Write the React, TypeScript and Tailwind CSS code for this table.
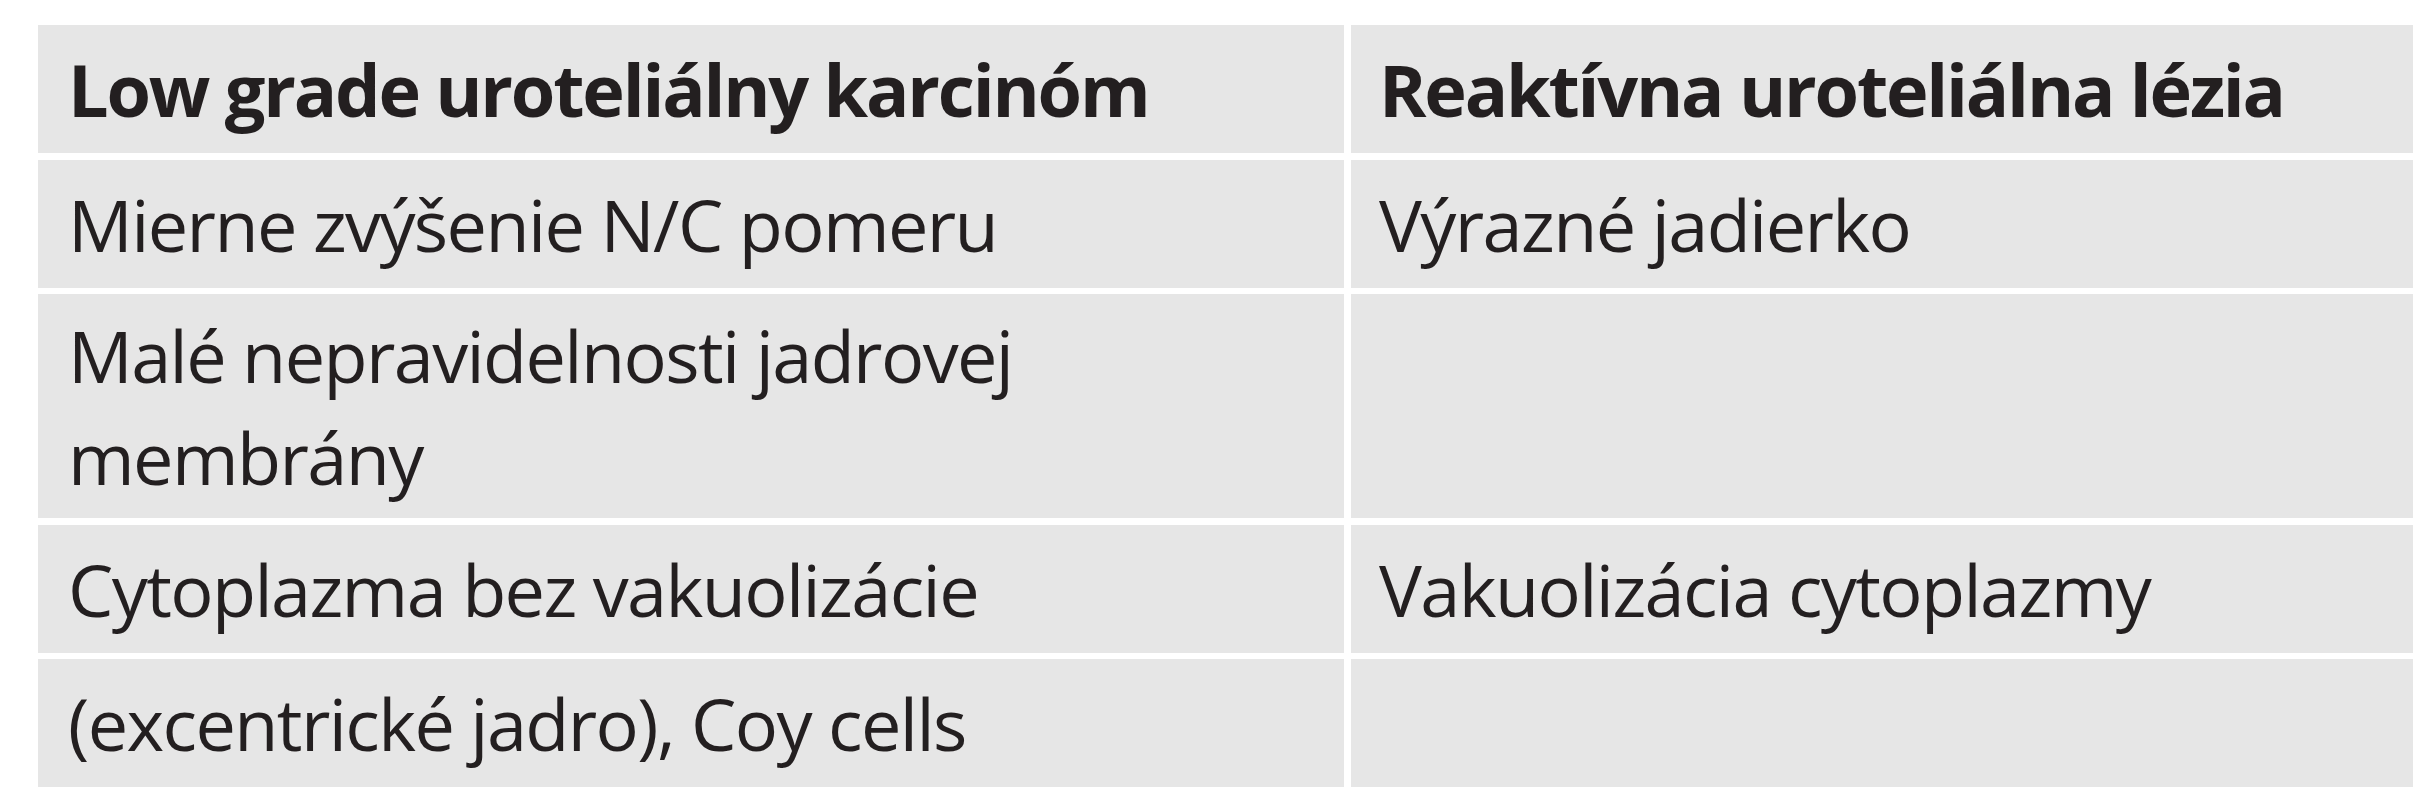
import React from "react";

const rows: [string, string][] = [
  ["Mierne zvýšenie N/C pomeru", "Výrazné jadierko"],
  ["Malé nepravidelnosti jadrovej membrány", ""],
  ["Cytoplazma bez vakuolizácie", "Vakuolizácia cytoplazmy"],
  ["(excentrické jadro), Coy cells", ""],
];

export default function App() {
  return (
    <div className="w-[2432px] h-[800px] bg-white pt-[25px] pl-[38px] text-[#231f20]" style={{ fontFamily: '"Open Sans", sans-serif' }}>
      <div className="grid grid-cols-[1306px_1062px] grid-rows-[128px_128px_224px_128px_128px] gap-x-[7px] gap-y-[6.5px]">
        <div className="bg-[#e6e6e6] flex items-center pl-[30px] text-[72px] font-bold leading-[102px] tracking-[-2.2px]">Low grade uroteliálny karcinóm</div>
        <div className="bg-[#e6e6e6] flex items-center pl-[28px] text-[72px] font-bold leading-[102px] tracking-[-2.2px]">Reaktívna uroteliálna lézia</div>
        {rows.map(([a, b], i) => (
          <React.Fragment key={i}>
            <div className="bg-[#e6e6e6] flex items-center pl-[30px] pr-[40px] text-[72px] leading-[102px] tracking-[-1.6px]">
              {i === 1 ? (
                <span>Malé nepravidelnosti jadrovej<br />membrány</span>
              ) : (
                a
              )}
            </div>
            <div className="bg-[#e6e6e6] flex items-center pl-[28px] text-[72px] leading-[102px] tracking-[-1.6px]">{b}</div>
          </React.Fragment>
        ))}
      </div>
    </div>
  );
}
